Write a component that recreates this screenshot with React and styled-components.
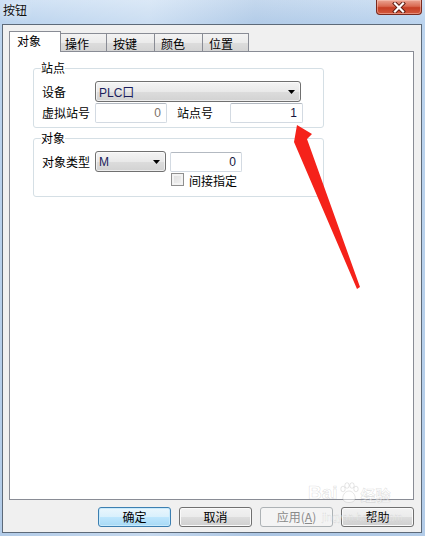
import React from 'react';
import styled, { createGlobalStyle, css } from 'styled-components';

const cjk = `"Noto Sans CJK SC", "Liberation Sans", sans-serif`;
const latin = `"Liberation Sans", "Noto Sans CJK SC", sans-serif`;

const GlobalStyle = createGlobalStyle`
  html, body { margin: 0; padding: 0; }
  body {
    width: 425px;
    height: 536px;
    overflow: hidden;
    background: #b9d1ea;
    font-family: ${cjk};
  }
  * { box-sizing: border-box; }
`;

const Window = styled.div`
  position: relative;
  width: 425px;
  height: 536px;
  display: flex;
  flex-direction: column;
  background:
    linear-gradient(90deg, rgba(255,255,255,0) 0%, rgba(255,255,255,0.25) 35%, rgba(120,150,190,0.12) 60%, rgba(255,255,255,0) 100%),
    linear-gradient(180deg, #cfe1f4 0px, #bcd4ee 22px, #b3cce8 100%);
  font-family: ${cjk};
  font-size: 12px;
  color: #000;
  overflow: hidden;
`;

const TitleBar = styled.div`
  height: 24px;
  flex: none;
  display: flex;
  align-items: flex-start;
  justify-content: space-between;
`;

const Title = styled.div`
  padding: 3px 0 0 3px;
  font-size: 12px;
  line-height: 14px;
  color: #111;
  text-shadow: 0 0 6px rgba(255, 255, 255, 0.9);
`;

const CloseButton = styled.div`
  width: 46px;
  height: 15px;
  margin-right: 3px;
  border: 1px solid #7a2a1e;
  border-top: none;
  border-radius: 0 0 4px 4px;
  background: linear-gradient(180deg, #eba593 0%, #d96a52 45%, #c63f25 55%, #d3583d 100%);
  box-shadow: inset 0 0 0 1px rgba(255, 210, 200, 0.45);
  display: flex;
  align-items: center;
  justify-content: center;
`;

const Client = styled.div`
  flex: 1;
  margin: 0 3px 3px 2px;
  border: 1px solid #5d6a79;
  background: #f0f0f0;
  padding: 6px 7px 5px 6px;
  display: flex;
  flex-direction: column;
`;

const TabStrip = styled.div`
  display: flex;
  align-items: flex-end;
  height: 21px;
  margin-bottom: -1px;
  position: relative;
  z-index: 1;
`;

const Tab = styled.div`
  width: ${(p) => p.$w}px;
  border: 1px solid #898c95;
  border-bottom: none;
  font-size: 12px;
  line-height: 14px;
  white-space: nowrap;
  padding-left: ${(p) => p.$pl}px;
  ${(p) =>
    p.$active
      ? css`
          height: 21px;
          padding-top: 2px;
          background: #ffffff;
        `
      : css`
          height: 18px;
          margin-bottom: 1px;
          padding-top: 3px;
          border-left: none;
          background: linear-gradient(180deg, #f3f3f3 0%, #ebebeb 50%, #dddddd 51%, #d4d4d4 100%);
        `}
`;

const Panel = styled.div`
  height: 449px;
  flex: none;
  border: 1px solid #898c95;
  background: #ffffff;
  padding: 9px 0 0 23px;
  display: flex;
  flex-direction: column;
`;

const Group = styled.fieldset`
  width: 291px;
  margin: ${(p) => (p.$first ? '0' : '3px')} 0 0 0;
  padding: 6px 8px ${(p) => p.$pb}px 8px;
  border: 1px solid #d5dfe5;
  border-radius: 3px;
  min-width: 0;
  display: flex;
  flex-direction: column;
`;

const Legend = styled.legend`
  padding: 0;
  margin-left: -1px;
  font-size: 12px;
  line-height: 14px;
`;

const Row = styled.div`
  display: flex;
  align-items: center;
  height: ${(p) => p.$h}px;
  margin-top: ${(p) => p.$mt || 0}px;
`;

const Label = styled.span`
  width: ${(p) => p.$w || 53}px;
  flex: none;
  font-size: 12px;
  line-height: 14px;
  white-space: nowrap;
  margin-left: ${(p) => p.$ml || 0}px;
`;

const Select = styled.div`
  width: ${(p) => p.$w}px;
  height: 21px;
  flex: none;
  border: 1px solid #707070;
  border-radius: 3px;
  background: linear-gradient(180deg, #f4f4f4 0%, #e9e9e9 50%, #dcdcdc 52%, #d2d2d2 100%);
  box-shadow: inset 0 0 0 1px rgba(255, 255, 255, 0.6);
  display: flex;
  align-items: center;
  justify-content: space-between;
  padding: 0 5px 0 3px;
  font-family: ${latin};
  font-size: 12px;
  color: #1a1d5c;
`;

const Input = styled.div`
  width: ${(p) => p.$w}px;
  height: 20px;
  flex: none;
  margin-left: ${(p) => p.$ml || 0}px;
  border: 1px solid #d3dae2;
  border-top-color: #b3b9c1;
  border-radius: 2px;
  background: #ffffff;
  display: flex;
  align-items: center;
  justify-content: flex-end;
  padding-right: 5px;
  font-family: ${latin};
  font-size: 12px;
  color: ${(p) => (p.$muted ? '#7a7068' : '#15163e')};
`;

const CheckRow = styled.div`
  display: flex;
  align-items: flex-start;
  height: 16px;
  padding-left: 129px;
`;

const CheckBox = styled.span`
  width: 13px;
  height: 13px;
  margin-top: 1px;
  flex: none;
  border: 1px solid #8f8f8f;
  background: linear-gradient(135deg, #dcdcdc 0%, #f4f4f4 100%);
  box-shadow: inset 0 0 0 2px #f3f3f3;
`;

const CheckLabel = styled.span`
  margin: 2px 0 0 5px;
  font-size: 12px;
  line-height: 14px;
`;

const ButtonRow = styled.div`
  display: flex;
  justify-content: flex-end;
  gap: 8px;
  margin-top: 7px;
`;

const Button = styled.div`
  width: 73px;
  height: 20px;
  border-radius: 3px;
  display: flex;
  align-items: center;
  justify-content: center;
  font-size: 12px;
  line-height: 14px;
  ${(p) =>
    p.$variant === 'default'
      ? css`
          border: 1px solid #3c7fb1;
          background: linear-gradient(180deg, #eaf6fd 0%, #d9f0fc 50%, #bee6fd 51%, #a7d9f5 100%);
          box-shadow: inset 0 0 0 1px #c8eafc;
          color: #000;
        `
      : p.$variant === 'disabled'
      ? css`
          border: 1px solid #adb2b5;
          background: #f4f4f4;
          color: #8a8a8a;
        `
      : css`
          border: 1px solid #707070;
          background: linear-gradient(180deg, #f2f2f2 0%, #ebebeb 50%, #dddddd 51%, #cfcfcf 100%);
          box-shadow: inset 0 0 0 1px #fafafa;
          color: #000;
        `}
`;

const Overlay = styled.svg`
  position: absolute;
  left: 0;
  top: 0;
  pointer-events: none;
`;

const Watermark = styled.div`
  position: absolute;
  left: 308px;
  top: 482px;
  pointer-events: none;
  display: flex;
  flex-direction: column;
  align-items: flex-start;
  color: rgba(255, 255, 255, 0.5);
  -webkit-text-stroke: 0.6px rgba(150, 150, 150, 0.3);
`;

const WatermarkTitle = styled.div`
  display: flex;
  align-items: flex-end;
  font-family: ${latin};
  font-weight: bold;
  font-size: 19px;
  line-height: 22px;
`;

const WatermarkCn = styled.span`
  font-family: ${cjk};
  font-size: 15px;
  line-height: 18px;
  margin-left: 1px;
`;

const WatermarkUrl = styled.div`
  font-family: ${latin};
  font-size: 10px;
  line-height: 11px;
  margin: 8px 0 0 14px;
  -webkit-text-stroke: 0.3px rgba(140, 140, 140, 0.3);
`;

const tabs = [
  { label: '对象', w: 52, pl: 7 },
  { label: '操作', w: 46, pl: 4 },
  { label: '按键', w: 48, pl: 6 },
  { label: '颜色', w: 48, pl: 6 },
  { label: '位置', w: 46, pl: 6 },
];

function Arrow() {
  return (
    <svg width="7" height="4" viewBox="0 0 7 4">
      <polygon points="0,0 7,0 3.5,4" fill="#000" />
    </svg>
  );
}

function Paw() {
  return (
    <svg width="22" height="22" viewBox="0 0 22 22">
      <g fill="rgba(255,255,255,0.5)" stroke="rgba(150,150,150,0.3)" strokeWidth="0.8">
        <ellipse cx="5" cy="7" rx="2.2" ry="2.8" />
        <ellipse cx="9" cy="3.5" rx="2.2" ry="2.8" />
        <ellipse cx="14" cy="3.5" rx="2.2" ry="2.8" />
        <ellipse cx="18" cy="7" rx="2.2" ry="2.8" />
        <path d="M11 9 C6 9 3 16 6 19 C8 21 14 21 16 19 C19 16 16 9 11 9 Z" />
      </g>
    </svg>
  );
}

export default function App() {
  return (
    <>
      <GlobalStyle />
      <Window>
        <TitleBar>
          <Title>按钮</Title>
          <CloseButton>
            <svg width="14" height="11" viewBox="0 0 14 11">
              <path d="M3 1.5 L11 9.5 M11 1.5 L3 9.5" stroke="#5a1a10" strokeWidth="4" strokeLinecap="square" />
              <path d="M3 1.5 L11 9.5 M11 1.5 L3 9.5" stroke="#ffffff" strokeWidth="2.2" strokeLinecap="square" />
            </svg>
          </CloseButton>
        </TitleBar>
        <Client>
          <TabStrip>
            {tabs.map((t, i) => (
              <Tab key={t.label} $w={t.w} $pl={t.pl} $active={i === 0}>
                {t.label}
              </Tab>
            ))}
          </TabStrip>
          <Panel>
            <Group $first $pb={4}>
              <Legend>站点</Legend>
              <Row $h={21}>
                <Label>设备</Label>
                <Select $w={206}>
                  <span>PLC口</span>
                  <Arrow />
                </Select>
              </Row>
              <Row $h={20} $mt={1}>
                <Label>虚拟站号</Label>
                <Input $w={72} $muted>0</Input>
                <Label $ml={10}>站点号</Label>
                <Input $w={73}>1</Input>
              </Row>
            </Group>
            <Group $pb={8}>
              <Legend>对象</Legend>
              <Row $h={21}>
                <Label>对象类型</Label>
                <Select $w={71}>
                  <span>M</span>
                  <Arrow />
                </Select>
                <Input $w={72} $ml={4}>0</Input>
              </Row>
              <CheckRow>
                <CheckBox />
                <CheckLabel>间接指定</CheckLabel>
              </CheckRow>
            </Group>
          </Panel>
          <ButtonRow>
            <Button $variant="default">确定</Button>
            <Button>取消</Button>
            <Button $variant="disabled">
              应用(<u>A</u>)
            </Button>
            <Button>帮助</Button>
          </ButtonRow>
        </Client>
        <Watermark>
          <WatermarkTitle>
            Bai
            <Paw />
            <WatermarkCn>经验</WatermarkCn>
          </WatermarkTitle>
          <WatermarkUrl>jingyan.baidu.com</WatermarkUrl>
        </Watermark>
        <Overlay width="425" height="536" viewBox="0 0 425 536">
          <polygon
            points="297,125 312,134 307,139 360,287 357,289 294,142"
            fill="#f5221a"
          />
        </Overlay>
      </Window>
    </>
  );
}
